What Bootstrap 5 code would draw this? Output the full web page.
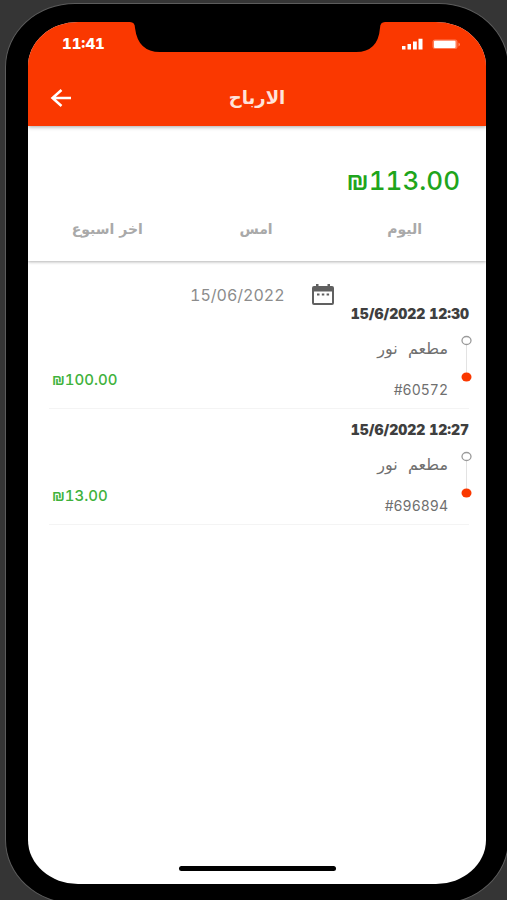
<!DOCTYPE html>
<html lang="ar">
<head>
<meta charset="utf-8">
<meta name="viewport" content="width=device-width, initial-scale=1">
<title>الارباح</title>
<link href="https://cdn.jsdelivr.net/npm/bootstrap@5.3.0/dist/css/bootstrap.min.css" rel="stylesheet">
<style>
body { background: #353535; font-family: Inter, "DejaVu Sans", sans-serif; font-variant-numeric: tabular-nums; color: #6f6f6f; padding: 3px 0 0 5px; margin-right: -2px; height: 100vh; overflow: hidden; }
.phone { background: #000; border: 1px solid #5c5c5c; border-radius: 70px / 64px; padding: 18px 22px 19px; min-height: calc(100vh + 1px); }
.screen { background: #fff; border-radius: 50px / 44px; overflow: hidden; }
.app-head { background: #fa3800; color: #fff; box-shadow: 0 1px 4px rgba(0,0,0,.35); z-index: 1; }
.status-bar { height: 44px; padding: 0 26px 0 34px; }
.notch { left: 102px; right: 101px; top: 0; height: 31px; }
.notch svg { width: 100%; height: 31px; }
.clock { font-size: 15px; font-weight: 800; line-height: 20px; }
.title-bar { height: 60px; padding: 4px 22px 0 22px; }
.title-bar h1 { font: bold 18px/28px "DejaVu Sans", sans-serif; color: #ffe3da; }
.side { width: 24px; }
.summary { box-shadow: 0 1px 3px rgba(0,0,0,.3); padding-top: 37px; }
.total { color: #1fa51c; font-size: 26px; font-weight: 500; line-height: 36px; padding-right: 26px; }
.period { color: #a9a9a9; font: bold 14px/24px "DejaVu Sans", sans-serif; }
.periods { padding: 16px 7px 20px 5px; }
.picker { color: #8c8c8c; font-size: 16px; line-height: 22px; padding: 23px 0 0; gap: 27px; margin-left: 162px; }
.orders { padding: 0 17px 0 21px; }
.order { border-bottom: 1px solid #f4f4f4; margin-bottom: 13px; }
.stamp { color: #3f3f3f; font-size: 14px; font-weight: 900; line-height: 16px; }
.order-body { height: 86px; padding-left: 3px; }
.price { color: #3fb23c; font-size: 15px; font-weight: 500; line-height: 20px; padding-top: 48px; }
.place { font: 16px/20px "DejaVu Sans", sans-serif; padding-top: 17px; }
.number { font-size: 14px; line-height: 20px; padding-top: 21px; }
.details { gap: 13px; margin-right: -4px; }
.home-bar { width: 157px; height: 5px; background: #000; margin-bottom: 13px; }
</style>
<script src="https://cdn.jsdelivr.net/npm/bootstrap@5.3.0/dist/js/bootstrap.bundle.min.js"></script>
</head>
<body>
<div class="phone d-flex flex-column">
  <div class="screen flex-grow-1 d-flex flex-column">
    <header class="app-head position-relative">
      <div class="notch position-absolute">
        <svg class="d-block" viewBox="0 0 255 31" preserveAspectRatio="none" aria-hidden="true"><path d="M0 0H255Q250 0 250 6Q248 30 226 30H30Q8 30 5 6Q5 0 0 0Z"/></svg>
      </div>
      <div class="status-bar d-flex align-items-center justify-content-between">
        <span class="clock">11:41</span>
        <svg width="58" height="12" viewBox="0 0 58 12" fill="#fff" aria-hidden="true"><path d="M0 8h3.500v3.500H0zM5.500 6h3.500v5.500H5.500zM11 3.500h3.800v8H11zM16.500 0.800h4v10.700h-4z"/><rect x="30.500" y="1.500" width="25" height="9.500" rx="2.500" fill="#ff7a55"/><rect x="32" y="2.700" width="21.500" height="7.200" rx="1"/><path d="M56.500 4.500q3 2 0 4z" fill="#ff8f6d"/></svg>
      </div>
      <div class="title-bar d-flex align-items-center justify-content-between">
        <button type="button" class="btn p-0 border-0 side lh-1 text-start" aria-label="رجوع"><svg class="d-block" width="22" height="18" viewBox="0 0 22 18" fill="none" stroke="#fff" stroke-width="2.500" aria-hidden="true"><path d="M21 9H3M11.500 1L2.500 9L11.500 17"/></svg></button>
        <h1 class="m-0">الارباح</h1>
        <span class="side"></span>
      </div>
    </header>
    <section class="summary">
      <div class="total text-end">₪113.00</div>
      <div class="periods row g-0">
        <div class="col text-center"><button type="button" class="btn period border-0 p-0">اخر اسبوع</button></div>
        <div class="col text-center"><button type="button" class="btn period border-0 p-0">امس</button></div>
        <div class="col text-center"><button type="button" class="btn period border-0 p-0">اليوم</button></div>
      </div>
    </section>
    <main class="flex-grow-1">
      <div class="picker d-flex align-items-center">
        <span>15/06/2022</span>
        <button type="button" class="btn p-0 border-0 lh-1" aria-label="اختر التاريخ"><svg class="d-block" width="22" height="22" viewBox="0 0 22 22" aria-hidden="true"><path fill="#606060" fill-rule="evenodd" d="M4 0h2.500v2h9V0H18v2h2q2 0 2 2v15q0 2-2 2H2q-2 0-2-2V4q0-2 2-2h2zM2 7.500V19h18V7.500zM5 9.500h2.500v2H5zM9.800 9.500h2.500v2H9.800zM14.600 9.500h2.500v2h-2.500z"/></svg></button>
      </div>
      <div class="orders">
        <article class="order">
          <div class="stamp text-end">15/6/2022 12:30</div>
          <div class="order-body d-flex justify-content-between">
            <div class="price">₪100.00</div>
            <div class="details d-flex">
              <div class="text-end"><div class="place" dir="rtl">مطعم&nbsp; نور</div><div class="number">#60572</div></div>
              <svg width="12" height="70" viewBox="0 0 12 70" aria-hidden="true"><path d="M5.500 23V53" stroke="#e3e3e3"/><ellipse cx="5.500" cy="18.500" rx="4.500" ry="4" fill="#fff" stroke="#9a9a9a" stroke-width="1.300"/><ellipse cx="5.500" cy="55" rx="5" ry="4.500" fill="#fa3800"/></svg>
            </div>
          </div>
        </article>
        <article class="order">
          <div class="stamp text-end">15/6/2022 12:27</div>
          <div class="order-body d-flex justify-content-between">
            <div class="price">₪13.00</div>
            <div class="details d-flex">
              <div class="text-end"><div class="place" dir="rtl">مطعم&nbsp; نور</div><div class="number">#696894</div></div>
              <svg width="12" height="70" viewBox="0 0 12 70" aria-hidden="true"><path d="M5.500 23V53" stroke="#e3e3e3"/><ellipse cx="5.500" cy="18.500" rx="4.500" ry="4" fill="#fff" stroke="#9a9a9a" stroke-width="1.300"/><ellipse cx="5.500" cy="55" rx="5" ry="4.500" fill="#fa3800"/></svg>
            </div>
          </div>
        </article>
      </div>
    </main>
    <div class="home-bar rounded-pill mx-auto"></div>
  </div>
</div>
</body>
</html>
